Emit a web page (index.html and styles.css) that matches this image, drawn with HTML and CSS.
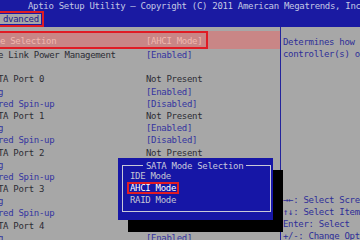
FILE: index.html
```html
<!DOCTYPE html>
<html lang="en">
<head>
  <meta charset="UTF-8" />
  <title>Aptio Setup Utility</title>
  <link rel="stylesheet" href="styles.css">
</head>
<body>
  <header class="top">
    <div class="title">Aptio Setup Utility &ndash; Copyright (C) 2011 American Megatrends, Inc.</div>
    <div class="tabs">
      <span class="tab-mark"><span class="tab">dvanced</span></span>
    </div>
  </header>

  <main class="screen">
    <section class="items">
      <div class="row selected">
        <span class="mark"><span class="label">e Selection</span><span class="value">[AHCI Mode]</span></span>
      </div>
      <div class="row"><span class="label dark">e Link Power Management</span><span class="value opt">[Enabled]</span></div>
      <div class="row"></div>
      <div class="row"><span class="label dark">TA Port 0</span><span class="value dark">Not Present</span></div>
      <div class="row"><span class="label opt">g</span><span class="value opt">[Enabled]</span></div>
      <div class="row"><span class="label opt">red Spin-up</span><span class="value opt">[Disabled]</span></div>
      <div class="row"><span class="label dark">TA Port 1</span><span class="value dark">Not Present</span></div>
      <div class="row"><span class="label opt">g</span><span class="value opt">[Enabled]</span></div>
      <div class="row"><span class="label opt">red Spin-up</span><span class="value opt">[Disabled]</span></div>
      <div class="row"><span class="label dark">TA Port 2</span><span class="value dark">Not Present</span></div>
      <div class="row"><span class="label opt">g</span><span class="value opt">[Enabled]</span></div>
      <div class="row"><span class="label opt">red Spin-up</span><span class="value opt">[Disabled]</span></div>
      <div class="row"><span class="label dark">TA Port 3</span><span class="value dark">Not Present</span></div>
      <div class="row"><span class="label opt">g</span><span class="value opt">[Enabled]</span></div>
      <div class="row"><span class="label opt">red Spin-up</span><span class="value opt">[Disabled]</span></div>
      <div class="row"><span class="label dark">TA Port 4</span><span class="value dark">Not Present</span></div>
      <div class="row"><span class="label opt">g</span><span class="value opt">[Enabled]</span></div>
    </section>

    <aside class="help">
      <div class="desc">
        <div>Determines how SATA</div>
        <div>controller(s) operate.</div>
      </div>
      <div class="keys">
        <div>&rarr;&larr;: Select Screen</div>
        <div>&uarr;&darr;: Select Item</div>
        <div>Enter: Select</div>
        <div>+/-: Change Opt.</div>
      </div>
    </aside>
  </main>

  <div class="popup">
    <div class="frame">
      <span class="popup-title">SATA Mode Selection</span>
      <div class="choices">
        <div class="choice">IDE Mode</div>
        <div class="choice current">AHCI Mode</div>
        <div class="choice">RAID Mode</div>
      </div>
    </div>
  </div>
</body>
</html>
```

FILE: styles.css
```css
:root {
  --bios-blue: #1a1aa2;
  --bios-gray: #a7a7a7;
  --opt-blue: #3434a0;
  --dark-text: #2c2c34;
  --mark-red: #e01c24;
}

* {
  box-sizing: border-box;
  margin: 0;
  padding: 0;
}

body {
  width: 360px;
  height: 240px;
  overflow: hidden;
  position: relative;
  background-color: var(--bios-gray);
  font-family: 'DejaVu Sans Mono', 'Liberation Mono', monospace;
  font-size: 9px;
  letter-spacing: -0.3px;
  white-space: nowrap;
}

.top {
  height: 27px;
  background-color: var(--bios-blue);
  overflow: hidden;
}

.title {
  padding: 1px 0 0 28px;
  line-height: 10px;
  color: #c4c8e4;
}

.tabs {
  display: flex;
}

.tab-mark {
  margin-left: -3px;
  padding: 1px;
  border: 2px solid var(--mark-red);
}

.tab {
  display: block;
  padding: 0 2px 0 3px;
  line-height: 10px;
  background-color: var(--bios-gray);
  color: #20208a;
}

.screen {
  display: flex;
  height: 213px;
}

.items {
  width: 281px;
  padding-top: 4px;
  border-right: 1px solid #24249c;
  overflow: hidden;
}

.row {
  display: flex;
  height: 12.2px;
  line-height: 12.2px;
  margin-left: -2px;
}

.label {
  width: 148px;
}

.dark { color: var(--dark-text); }
.opt { color: var(--opt-blue); }

.row.selected {
  height: 18px;
  margin-left: 0;
  background-color: #c98686;
  color: #f0b8b0;
}

.mark {
  display: flex;
  width: 210px;
  margin-left: -2px;
  padding-top: 3px;
  line-height: 11px;
  border: 2px solid var(--mark-red);
}

.mark .label {
  width: 146px;
}

.help {
  flex: 1;
  padding: 9px 0 0 2px;
  line-height: 12.2px;
  color: #2e2e98;
  overflow: hidden;
}

.keys {
  margin-top: 134px;
  line-height: 12px;
}

.popup {
  position: absolute;
  left: 118px;
  top: 158px;
  width: 155px;
  height: 62px;
  padding: 7px 2px 8px 4px;
  background-color: #1616a6;
  box-shadow: 10px 12px 0 #000;
}

.frame {
  position: relative;
  height: 100%;
  border: 1px solid #c8c8d8;
}

.popup-title {
  position: absolute;
  left: 20px;
  top: -5px;
  padding: 0 3px;
  line-height: 10px;
  background-color: #1616a6;
  color: #c8c8dc;
}

.choices {
  padding: 4px 0 0 4px;
}

.choice {
  width: fit-content;
  padding: 0 1px;
  line-height: 8.2px;
  border: 2px solid transparent;
  color: #c4c4d4;
}

.choice.current {
  border-color: var(--mark-red);
  color: #ffffff;
}
```
